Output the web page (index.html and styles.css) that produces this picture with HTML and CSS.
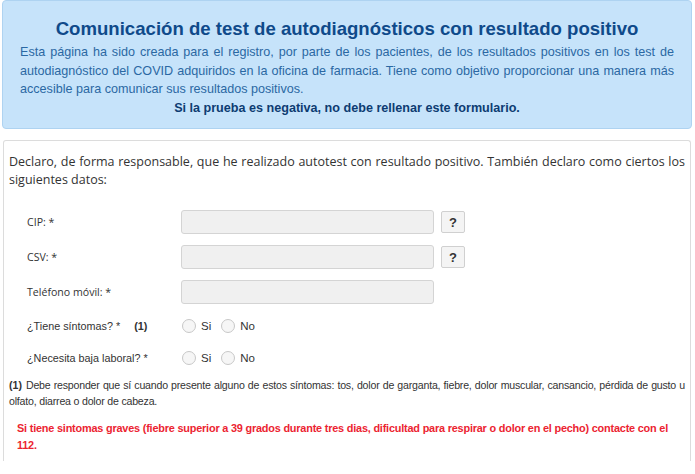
FILE: index.html
```html
<!DOCTYPE html>
<html lang="es">
<head>
    <meta charset="UTF-8"/>
    <meta name="viewport" content="width=device-width, initial-scale=1.0"/>
    <title>Comunicación de test de autodiagnósticos</title>
    <link rel="stylesheet" href="styles.css">
</head>
<body>

<div class="intro">
    <h1>Comunicación de test de autodiagnósticos con resultado positivo</h1>
    <p class="intro-text">Esta página ha sido creada para el registro, por parte de los pacientes, de los resultados positivos en los test de autodiagnóstico del COVID adquiridos en la oficina de farmacia. Tiene como objetivo proporcionar una manera más accesible para comunicar sus resultados positivos.</p>
    <p class="intro-warn">Si la prueba es negativa, no debe rellenar este formulario.</p>
</div>

<div class="panel">
    <p class="declare">Declaro, de forma responsable, que he realizado autotest con resultado positivo. También declaro como ciertos los siguientes datos:</p>

    <div class="form">
        <div class="row">
            <label class="label" for="cip">CIP: *</label>
            <input class="field" type="text" id="cip"/>
            <button class="help" type="button">?</button>
        </div>
        <div class="row">
            <label class="label" for="csv">CSV: *</label>
            <input class="field" type="text" id="csv"/>
            <button class="help" type="button">?</button>
        </div>
        <div class="row">
            <label class="label" for="phone">Teléfono móvil: *</label>
            <input class="field" type="text" id="phone"/>
        </div>
        <div class="row radio-row">
            <span class="label alt">¿Tiene síntomas? * <b class="ref">(1)</b></span>
            <div class="choices">
                <label class="choice"><span class="radio"></span>Si</label>
                <label class="choice"><span class="radio"></span>No</label>
            </div>
        </div>
        <div class="row radio-row">
            <span class="label alt">¿Necesita baja laboral? *</span>
            <div class="choices">
                <label class="choice"><span class="radio"></span>Si</label>
                <label class="choice"><span class="radio"></span>No</label>
            </div>
        </div>
    </div>

    <p class="note"><b>(1)</b>Debe responder que sí cuando presente alguno de estos síntomas: tos, dolor de garganta, fiebre, dolor muscular, cansancio, pérdida de gusto u olfato, diarrea o dolor de cabeza.</p>

    <p class="alert">Si tiene sintomas graves (fiebre superior a 39 grados durante tres dias, dificultad para respirar o dolor en el pecho) contacte con el 112.</p>
</div>

</body>
</html>
```

FILE: styles.css
```css
* {
    box-sizing: border-box;
}

body {
    margin: 0 3px 0 2px;
    font-family: "Liberation Sans", Arial, sans-serif;
    background: #fff;
}

.intro {
    background: #c6e3fa;
    border: 1px solid #aed3f1;
    border-radius: 4px;
    padding: 14px 17px 10px 17px;
}

.intro h1 {
    margin: 0;
    text-align: center;
    font-size: 18.6px;
    font-weight: bold;
    color: #0f4a8a;
    line-height: 28px;
}

.intro-text {
    margin: 0;
    font-size: 12.6px;
    line-height: 18.7px;
    color: #2b68a3;
    text-align: justify;
}

.intro-warn {
    margin: 0;
    text-align: center;
    font-size: 12.6px;
    line-height: 18.7px;
    font-weight: bold;
    color: #0d3c72;
}

.panel {
    margin: 11px 1px 0 1px;
    border: 1px solid #dcdcdc;
    border-bottom: none;
    border-radius: 3px 3px 0 0;
    padding: 12px 5px 0 5px;
    height: 321px;
}

.declare {
    margin: 0;
    font-family: "Open Sans", sans-serif;
    font-size: 12.5px;
    line-height: 18px;
    color: #333;
    text-align: justify;
}

.form {
    margin-top: 16px;
}

.row {
    display: flex;
    align-items: center;
    height: 35px;
}

.radio-row {
    height: 32px;
}

.label {
    width: 172px;
    padding-left: 18px;
    font-family: "Open Sans", sans-serif;
    font-size: 10.6px;
    color: #333;
}

.label.alt {
    font-family: "Liberation Sans", Arial, sans-serif;
    font-size: 10.8px;
}

.ref {
    margin-left: 11px;
}

.field {
    width: 253px;
    height: 24px;
    background: #f0f0f0;
    border: 1px solid #d4d4d4;
    border-radius: 3px;
}

.help {
    margin-left: 7px;
    width: 24px;
    height: 22px;
    padding: 0;
    background: #f4f4f4;
    border: 1px solid #d0d0d0;
    border-radius: 2px;
    font-family: "Liberation Sans", Arial, sans-serif;
    font-weight: bold;
    font-size: 13px;
    color: #333;
}

.choices {
    display: flex;
    gap: 9px;
}

.choice {
    display: flex;
    align-items: center;
    font-size: 11.5px;
    color: #333;
}

.radio {
    width: 14px;
    height: 14px;
    border: 1px solid #c8c8c8;
    border-radius: 50%;
    background: #f6f6f6;
    margin: 0 5px 0 1px;
}

.note {
    margin: 3px 0 0 0;
    font-size: 10.6px;
    letter-spacing: -0.2px;
    line-height: 16px;
    color: #333;
    text-align: justify;
}

.note b {
    letter-spacing: 0;
    margin-right: 4px;
}

.alert {
    margin: 11px 0 0 0;
    padding-left: 8px;
    padding-right: 10px;
    font-size: 10.9px;
    letter-spacing: -0.2px;
    line-height: 17px;
    font-weight: bold;
    color: #ec2431;
}
```
